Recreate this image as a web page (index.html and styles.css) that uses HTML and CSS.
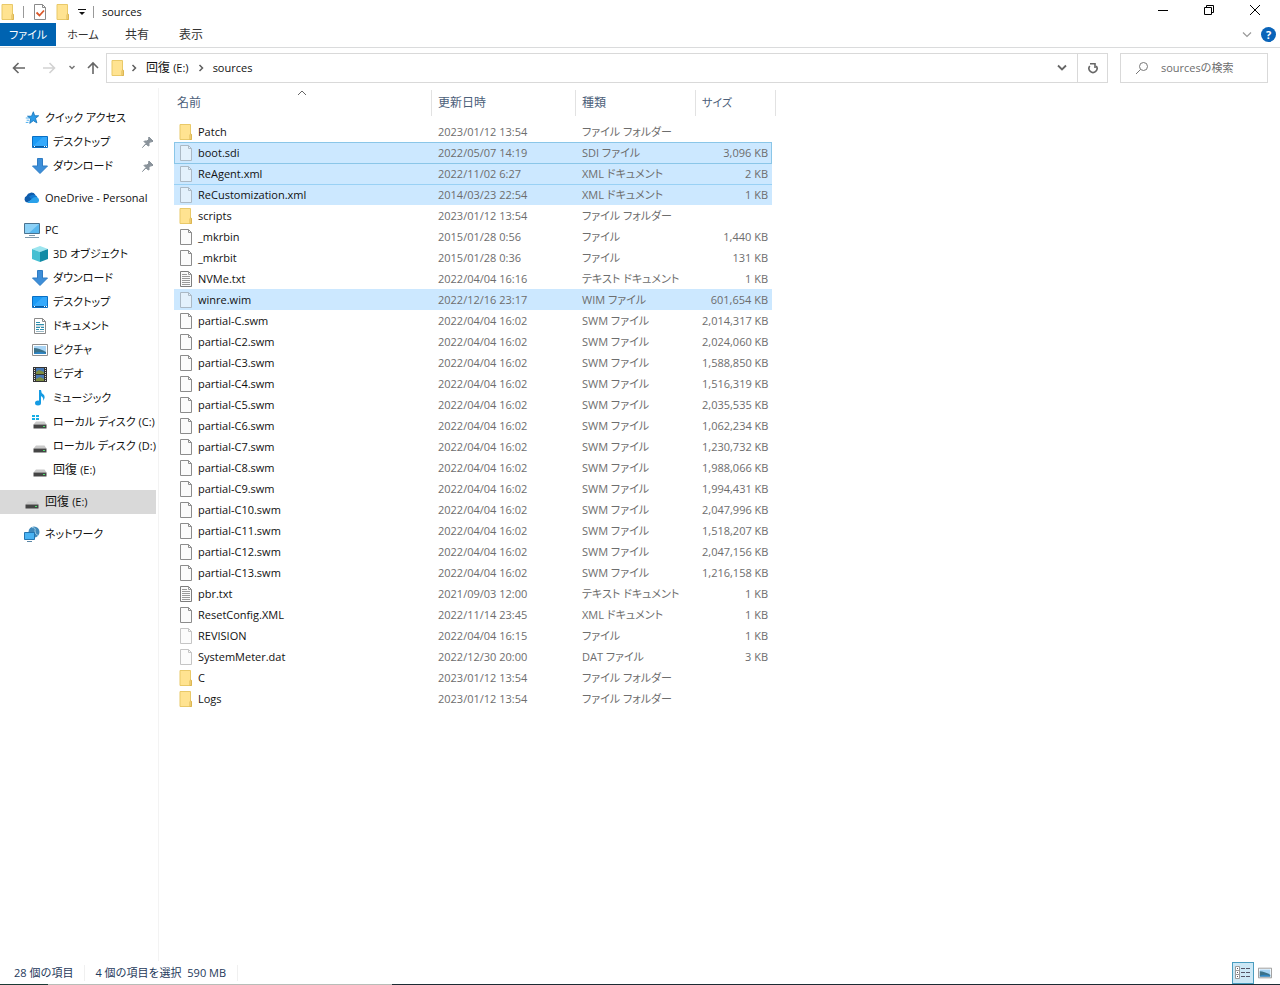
FILE: index.html
```html
<!DOCTYPE html>
<html lang="ja">
<head>
  <meta charset="UTF-8">
  <meta name="viewport" content="width=device-width, initial-scale=1.0">
  <title>sources</title>

  <link rel="stylesheet" href="styles.css">
</head>
<body>

  <!-- Shared icons -->
  <svg class="sprite" aria-hidden="true">
    <symbol id="folder" viewBox="0 0 16 16">
      <path d="M2 .5h10.500v10h1v5H2z" fill="#ffe391" stroke="#e9c969"/>
      <path d="M12 15.500v-5q1-1.500 1.500 0v5z" fill="#ffe391" stroke="#dcb653"/>
    </symbol>
    <symbol id="file" viewBox="0 0 16 16">
      <path d="M2.500.5h8l3 3v12h-11z" fill="#fbfbfb" stroke="#8c8c8c"/>
      <path d="M10.500.5v3h3" fill="none" stroke="#8c8c8c"/>
    </symbol>
    <symbol id="text" viewBox="0 0 16 16">
      <path d="M2.500.5h8l3 3v12h-11z" fill="#fbfbfb" stroke="#7d7d7d"/>
      <path d="M10.500.5v3h3M4 3.500h5M4 5.500h8M4 7.500h8M4 9.500h8M4 11.500h8M4 13.500h8" fill="none" stroke="#9a9a9a"/>
    </symbol>
    <symbol id="desktop" viewBox="0 0 16 16">
      <path d="M.5 2.500h15v11H.5z" fill="#1c9bf5" stroke="#0a6fc4"/>
      <path d="M1 12L11 3h4v9z" fill="#35a9fb"/>
      <path d="M1 12.500h14" stroke="#0d5a9e"/>
      <path d="M2 12.500h1M12 12.500h1M14 12.500h1" stroke="#fff"/>
    </symbol>
    <symbol id="download" viewBox="0 0 16 16">
      <path d="M5.500.5h5v7.500h5L8 15.500.5 8h5z" fill="#3d8ed8" stroke="#2f7cc4"/>
    </symbol>
    <symbol id="drive" viewBox="0 0 16 16">
      <path d="M4 7.500h8.500l2 3h-13z" fill="#c9c9c9"/>
      <path d="M1.500 10.500h13v4h-13z" fill="#454545"/>
      <path d="M11 12.500h2" stroke="#4ce06a"/>
    </symbol>
    <symbol id="pin" viewBox="0 0 12 12">
      <path d="M7 1l4 4-1 1-1-.5L7 7.500v2.500L5.500 9.500 4 8 .5 11.500l3.500-4L2 5.500 2.500 5H5l2-2-.5-1z" fill="#8a939b" stroke="#8a939b"/>
    </symbol>
    <symbol id="picture" viewBox="0 0 16 16">
      <path d="M.5 2.500h15v11H.5z" fill="#fff" stroke="#8f8f8f"/>
      <path d="M2 4h12v8H2z" fill="#a9d5f5"/>
      <path d="M2 6q5 0 12 4v2H2z" fill="#3b7189"/>
      <path d="M2 11q5-2 12 0v1H2z" fill="#2f86c5"/>
    </symbol>
    <symbol id="crumb" viewBox="0 0 8 8">
      <path d="M2.500 1l3 3-3 3" fill="none" stroke="#5f5f5f" stroke-width="1.500"/>
    </symbol>
  </svg>

  <!-- Title bar -->
  <header class="titlebar">
    <div class="quick-access">
      <svg class="icon"><use href="#folder"/></svg>
      <span class="bar"></span>
      <button aria-label="プロパティ">
        <svg class="icon" viewBox="0 0 16 16"><path d="M2.500.5h8l3 3v12h-11z" fill="#fff" stroke="#8a8a8a"/><path d="M10.500.5v3h3" fill="none" stroke="#8a8a8a"/><path d="M4.500 8.500l3 3 4.500-5" fill="none" stroke="#d9582b" stroke-width="1.800"/></svg>
      </button>
      <button aria-label="新しいフォルダー"><svg class="icon"><use href="#folder"/></svg></button>
      <button class="customize" aria-label="カスタマイズ">
        <svg width="8" height="8" viewBox="0 0 8 8"><path d="M0 1.500h8" stroke="#111"/><path d="M1 4h6L4 7z" fill="#111"/></svg>
      </button>
      <span class="bar"></span>
    </div>
    <h1>sources</h1>
    <div class="window-buttons">
      <button aria-label="最小化"><svg width="10" height="10"><path d="M0 5.500h10" stroke="#000"/></svg></button>
      <button aria-label="元に戻す"><svg width="10" height="10"><path d="M.5 2.500h7v7h-7zM2.500 2.500v-2h7v7h-2" fill="none" stroke="#000"/></svg></button>
      <button aria-label="閉じる"><svg width="10" height="10"><path d="M0 0l10 10M10 0L0 10" stroke="#000"/></svg></button>
    </div>
  </header>

  <!-- Ribbon tabs -->
  <nav class="ribbon">
    <button class="file-tab">ファイル</button>
    <button>ホーム</button>
    <button class="kanji">共有</button>
    <button class="kanji">表示</button>
    <div class="ribbon-end">
      <button aria-label="リボンの展開"><svg width="10" height="6"><path d="M1 .5l4 4 4-4" fill="none" stroke="#999" stroke-width="1.200"/></svg></button>
      <button class="help" aria-label="ヘルプ">?</button>
    </div>
  </nav>

  <!-- Address bar -->
  <div class="toolbar">
    <div class="history">
      <button aria-label="戻る"><svg width="14" height="12"><path d="M13 6H2M6.500 1L1.500 6l5 5" fill="none" stroke="#666" stroke-width="1.600"/></svg></button>
      <button aria-label="進む"><svg width="14" height="12"><path d="M1 6h11M7.500 1l5 5-5 5" fill="none" stroke="#d2d2d2" stroke-width="1.600"/></svg></button>
      <button class="narrow" aria-label="最近の場所"><svg width="8" height="6"><path d="M1.500 1L4 3.500 6.500 1" fill="none" stroke="#777" stroke-width="1.500"/></svg></button>
      <button class="up" aria-label="上へ"><svg width="12" height="14"><path d="M6 13V2M1 7l5-5 5 5" fill="none" stroke="#666" stroke-width="1.600"/></svg></button>
    </div>
    <div class="address">
      <svg class="icon"><use href="#folder"/></svg>
      <svg class="crumb"><use href="#crumb"/></svg>
      <button class="kanji">回復 <span class="latin">(E:)</span></button>
      <svg class="crumb"><use href="#crumb"/></svg>
      <button>sources</button>
      <button class="drop" aria-label="以前の場所"><svg width="10" height="8"><path d="M1 1.500l4 4 4-4" fill="none" stroke="#666" stroke-width="1.800"/></svg></button>
      <button class="refresh" aria-label="更新"><svg width="12" height="12"><path d="M2.800 4a4 4 0 1 0 6.400 0" fill="none" stroke="#666" stroke-width="1.600"/><path d="M3 1.800h5v4.200" fill="none" stroke="#666" stroke-width="1.600"/></svg></button>
    </div>
    <label class="search">
      <svg width="14" height="14"><circle cx="8.500" cy="5.500" r="4" fill="none" stroke="#777"/><path d="M5.500 8.500l-4.500 4.500" stroke="#777"/></svg>
      <input type="text" placeholder="sourcesの検索" aria-label="sourcesの検索">
    </label>
  </div>

  <main>
    <!-- Navigation pane -->
    <nav class="sidebar">
      <ul>
        <li><a href="#"><svg class="icon" viewBox="-1 -1 18 18"><path d="M9.500 1l1.500 4.500h4.500L12 8.500l1.500 5L9.500 11l-4 3 1-5L3 6h4.500z" fill="#2c9be8" stroke="#1878bd"/><path d="M1 8h4M2 10.500h3M1 13h3" stroke="#3da8ee"/></svg>クイック アクセス</a></li>
        <li class="child"><a href="#"><svg class="icon"><use href="#desktop"/></svg>デスクトップ<svg class="pin"><use href="#pin"/></svg></a></li>
        <li class="child"><a href="#"><svg class="icon"><use href="#download"/></svg>ダウンロード<svg class="pin"><use href="#pin"/></svg></a></li>
      </ul>
      <ul>
        <li><a href="#"><svg class="icon" viewBox="0 0 16 16"><path d="M3 12.500A3.500 3.500 0 0 1 2.500 6a5 5 0 0 1 9-1L8 10z" fill="#0f5cab"/><path d="M11 5a4 4 0 0 1 2.500 2.500L8 10 5 6.500Q8 4 11 5z" fill="#1178d0"/><path d="M3 13L9.500 7.500q2-1 4 0A3 3 0 0 1 13 13z" fill="#2aa1ea"/></svg>OneDrive - Personal</a></li>
      </ul>
      <ul>
        <li><a href="#"><svg class="icon" viewBox="0 0 16 16"><path d="M.5 1.500h15v10H.5z" fill="#59b8ef" stroke="#4a7390"/><path d="M1 2h14L5 11H1z" fill="#8cd1f7"/><path d="M5 13.500h6M1 15.500h14" stroke="#7e98aa"/></svg>PC</a></li>
        <li class="child"><a href="#"><svg class="icon" viewBox="0 0 16 16"><path d="M0 3l8-3 8 3-8 3z" fill="#9ce5ef"/><path d="M0 3l8 3v10l-8-3z" fill="#45bfd2"/><path d="M16 3L8 6v10l8-3z" fill="#118ba5"/></svg>3D オブジェクト</a></li>
        <li class="child"><a href="#"><svg class="icon"><use href="#download"/></svg>ダウンロード</a></li>
        <li class="child"><a href="#"><svg class="icon"><use href="#desktop"/></svg>デスクトップ</a></li>
        <li class="child"><a href="#"><svg class="icon" viewBox="0 0 16 16"><path d="M2.500.5h8l3 3v12h-11z" fill="#fff" stroke="#8a8a8a"/><path d="M10.500.5v3h3" fill="none" stroke="#8a8a8a"/><path d="M4 4.500h4M4 6.500h8M4 9.500h4M9 9.500h3M4 11.500h3M8 11.500h4" stroke="#2d8fae"/><path d="M4 8h8M4 13.500h8" stroke="#9ab8c5"/></svg>ドキュメント</a></li>
        <li class="child"><a href="#"><svg class="icon"><use href="#picture"/></svg>ピクチャ</a></li>
        <li class="child"><a href="#"><svg class="icon" viewBox="0 0 16 16"><path d="M1 1h14v15H1z" fill="#333"/><path d="M4 2h8v6H4zM4 9h8v6H4z" fill="#4778b5"/><path d="M4 6l3-2 5 2v2H4zM4 13l4-2 4 2v2H4z" fill="#7d8d42"/><path d="M2.500 2v14M13.500 2v14" stroke="#ddd" stroke-dasharray="1 1"/></svg>ビデオ</a></li>
        <li class="child"><a href="#"><svg class="icon" viewBox="0 0 16 16"><path d="M7 0h2q0 3 2.500 4.500Q14 7 11 11q1-3.500-2-5v7H7z" fill="#159be3"/><ellipse cx="6" cy="13" rx="3" ry="2.500" fill="#159be3"/></svg>ミュージック</a></li>
        <li class="child"><a href="#"><svg class="icon" viewBox="0 0 16 16"><use href="#drive"/><path d="M0 1h3v2H0zM4 1h3v2H4zM0 4h3v2H0zM4 4h3v2H4z" fill="#17aee5"/></svg>ローカル ディスク (C:)</a></li>
        <li class="child"><a href="#"><svg class="icon"><use href="#drive"/></svg>ローカル ディスク (D:)</a></li>
        <li class="child"><a href="#" class="kanji"><svg class="icon"><use href="#drive"/></svg>回復 <span class="latin">(E:)</span></a></li>
      </ul>
      <ul>
        <li class="current"><a href="#" class="kanji"><svg class="icon"><use href="#drive"/></svg>回復 <span class="latin">(E:)</span></a></li>
      </ul>
      <ul>
        <li><a href="#"><svg class="icon" viewBox="0 0 16 16"><circle cx="10" cy="6" r="5.500" fill="#3f88ba"/><path d="M8 1.500q4 0 3 3t3 5" fill="none" stroke="#9fd0e8"/><path d="M.5 6.500h10v7H.5z" fill="#49b3f3" stroke="#2475b0"/><path d="M3 15.500h5" stroke="#5c87a5"/></svg>ネットワーク</a></li>
      </ul>
    </nav>

    <!-- File list -->
    <section class="files">
      <table>
        <colgroup>
          <col class="col-name"><col class="col-date"><col class="col-type"><col class="col-size"><col class="col-edge">
        </colgroup>
        <thead>
          <tr>
            <th class="sorted"><button class="kanji">名前</button><svg width="10" height="6"><path d="M1 5l4-4 4 4" fill="none" stroke="#666"/></svg></th>
            <th><button class="kanji">更新日時</button></th>
            <th><button class="kanji">種類</button></th>
            <th colspan="2"><button>サイズ</button></th>
          </tr>
        </thead>
        <tbody>
          <tr><td><svg class="icon"><use href="#folder"/></svg>Patch</td><td>2023/01/12 13:54</td><td>ファイル フォルダー</td><td></td></tr>
          <tr class="selected focused"><td><svg class="icon faded"><use href="#file"/></svg>boot.sdi</td><td>2022/05/07 14:19</td><td>SDI ファイル</td><td>3,096 KB</td></tr>
          <tr class="selected"><td><svg class="icon faded"><use href="#file"/></svg>ReAgent.xml</td><td>2022/11/02 6:27</td><td>XML ドキュメント</td><td>2 KB</td></tr>
          <tr class="selected"><td><svg class="icon faded"><use href="#file"/></svg>ReCustomization.xml</td><td>2014/03/23 22:54</td><td>XML ドキュメント</td><td>1 KB</td></tr>
          <tr><td><svg class="icon"><use href="#folder"/></svg>scripts</td><td>2023/01/12 13:54</td><td>ファイル フォルダー</td><td></td></tr>
          <tr><td><svg class="icon"><use href="#file"/></svg>_mkrbin</td><td>2015/01/28 0:56</td><td>ファイル</td><td>1,440 KB</td></tr>
          <tr><td><svg class="icon"><use href="#file"/></svg>_mkrbit</td><td>2015/01/28 0:36</td><td>ファイル</td><td>131 KB</td></tr>
          <tr><td><svg class="icon"><use href="#text"/></svg>NVMe.txt</td><td>2022/04/04 16:16</td><td>テキスト ドキュメント</td><td>1 KB</td></tr>
          <tr class="selected"><td><svg class="icon faded"><use href="#file"/></svg>winre.wim</td><td>2022/12/16 23:17</td><td>WIM ファイル</td><td>601,654 KB</td></tr>
          <tr><td><svg class="icon"><use href="#file"/></svg>partial-C.swm</td><td>2022/04/04 16:02</td><td>SWM ファイル</td><td>2,014,317 KB</td></tr>
          <tr><td><svg class="icon"><use href="#file"/></svg>partial-C2.swm</td><td>2022/04/04 16:02</td><td>SWM ファイル</td><td>2,024,060 KB</td></tr>
          <tr><td><svg class="icon"><use href="#file"/></svg>partial-C3.swm</td><td>2022/04/04 16:02</td><td>SWM ファイル</td><td>1,588,850 KB</td></tr>
          <tr><td><svg class="icon"><use href="#file"/></svg>partial-C4.swm</td><td>2022/04/04 16:02</td><td>SWM ファイル</td><td>1,516,319 KB</td></tr>
          <tr><td><svg class="icon"><use href="#file"/></svg>partial-C5.swm</td><td>2022/04/04 16:02</td><td>SWM ファイル</td><td>2,035,535 KB</td></tr>
          <tr><td><svg class="icon"><use href="#file"/></svg>partial-C6.swm</td><td>2022/04/04 16:02</td><td>SWM ファイル</td><td>1,062,234 KB</td></tr>
          <tr><td><svg class="icon"><use href="#file"/></svg>partial-C7.swm</td><td>2022/04/04 16:02</td><td>SWM ファイル</td><td>1,230,732 KB</td></tr>
          <tr><td><svg class="icon"><use href="#file"/></svg>partial-C8.swm</td><td>2022/04/04 16:02</td><td>SWM ファイル</td><td>1,988,066 KB</td></tr>
          <tr><td><svg class="icon"><use href="#file"/></svg>partial-C9.swm</td><td>2022/04/04 16:02</td><td>SWM ファイル</td><td>1,994,431 KB</td></tr>
          <tr><td><svg class="icon"><use href="#file"/></svg>partial-C10.swm</td><td>2022/04/04 16:02</td><td>SWM ファイル</td><td>2,047,996 KB</td></tr>
          <tr><td><svg class="icon"><use href="#file"/></svg>partial-C11.swm</td><td>2022/04/04 16:02</td><td>SWM ファイル</td><td>1,518,207 KB</td></tr>
          <tr><td><svg class="icon"><use href="#file"/></svg>partial-C12.swm</td><td>2022/04/04 16:02</td><td>SWM ファイル</td><td>2,047,156 KB</td></tr>
          <tr><td><svg class="icon"><use href="#file"/></svg>partial-C13.swm</td><td>2022/04/04 16:02</td><td>SWM ファイル</td><td>1,216,158 KB</td></tr>
          <tr><td><svg class="icon"><use href="#text"/></svg>pbr.txt</td><td>2021/09/03 12:00</td><td>テキスト ドキュメント</td><td>1 KB</td></tr>
          <tr><td><svg class="icon"><use href="#file"/></svg>ResetConfig.XML</td><td>2022/11/14 23:45</td><td>XML ドキュメント</td><td>1 KB</td></tr>
          <tr><td><svg class="icon faded"><use href="#file"/></svg>REVISION</td><td>2022/04/04 16:15</td><td>ファイル</td><td>1 KB</td></tr>
          <tr><td><svg class="icon faded"><use href="#file"/></svg>SystemMeter.dat</td><td>2022/12/30 20:00</td><td>DAT ファイル</td><td>3 KB</td></tr>
          <tr><td><svg class="icon"><use href="#folder"/></svg>C</td><td>2023/01/12 13:54</td><td>ファイル フォルダー</td><td></td></tr>
          <tr><td><svg class="icon"><use href="#folder"/></svg>Logs</td><td>2023/01/12 13:54</td><td>ファイル フォルダー</td><td></td></tr>
        </tbody>
      </table>
    </section>
  </main>

  <!-- Status bar -->
  <footer>
    <span class="count">28 個の項目</span>
    <span class="count">4 個の項目を選択&nbsp; 590 MB</span>
    <div class="views">
      <button class="active" aria-label="詳細"><svg width="16" height="14"><path d="M.5.5h4v4h-4zM.5 4.500h4v4h-4zM.5 8.500h4v4h-4z" fill="#fff" stroke="#999"/><path d="M2 2.500h1M2 6.500h1M2 10.500h1M6 2.500h4M11 2.500h4M6 6.500h4M11 6.500h4M6 10.500h4M11 10.500h4" stroke="#556"/></svg></button>
      <button aria-label="大アイコン"><svg width="14" height="14"><use href="#picture"/></svg></button>
    </div>
  </footer>

</body>
</html>
```
FILE: styles.css
```css
/* Global Styles */
* {
  box-sizing: border-box;
}

body {
  margin: 0;
  min-height: 100vh;
  display: flex;
  flex-direction: column;
  background: #fff;
  color: #111;
  font-family: "Open Sans", "Noto Sans CJK JP", sans-serif;
  font-size: 11px;
  line-height: 16px;
  font-feature-settings: "palt";
}

button, input {
  font: inherit;
  font-feature-settings: inherit;
  color: inherit;
  background: none;
  border: none;
  padding: 0;
}

button {
  display: flex;
  align-items: center;
  justify-content: center;
  white-space: pre;
}

svg {
  flex: none;
}

.sprite {
  position: absolute;
  width: 0;
  height: 0;
}

.icon {
  width: 16px;
  height: 16px;
}

.faded {
  opacity: 0.5;
}

.kanji {
  font-size: 12px;
  font-feature-settings: normal;
}

.latin {
  font-size: 11px;
}

/* Title bar */
.titlebar {
  display: flex;
  height: 23px;
}

.quick-access {
  display: flex;
  align-items: center;
}

.quick-access .bar {
  width: 1px;
  height: 12px;
  margin: 0 8px 0 7px;
  background: #999;
}

.quick-access button + button {
  margin-left: 7px;
}

.quick-access .customize {
  width: 8px;
}

.titlebar h1 {
  margin: 0;
  font-size: 11px;
  font-weight: normal;
  line-height: 23px;
}

.window-buttons {
  display: flex;
  margin-left: auto;
  margin-right: 2px;
}

.window-buttons button {
  width: 46px;
  height: 20px;
}

/* Ribbon */
.ribbon {
  display: flex;
  height: 25px;
  padding-bottom: 1px;
  border-bottom: 1px solid #dadbdc;
  color: #333;
}

.ribbon > button {
  width: 54px;
}

.ribbon .file-tab {
  width: 56px;
  background: #0063b1;
  color: #fff;
}

.ribbon-end {
  display: flex;
  align-items: center;
  gap: 9px;
  margin-left: auto;
  margin-right: 4px;
}

.ribbon .help {
  width: 15px;
  height: 15px;
  border-radius: 50%;
  background: #0a64b9;
  color: #fff;
  font-weight: bold;
}

/* Address bar */
.toolbar {
  display: flex;
  padding: 5px 12px 5px 4px;
}

.history {
  display: flex;
  width: 102px;
}

.history button {
  width: 30px;
}

.history .narrow {
  width: 16px;
}

.history .up {
  width: 26px;
}

.address {
  flex: 1;
  display: flex;
  align-items: center;
  height: 30px;
  padding-left: 3px;
  border: 1px solid #d9d9d9;
}

.crumb {
  width: 8px;
  height: 8px;
  margin: 0 8px;
}

.icon + .crumb {
  margin-left: 4px;
}

.address .drop {
  width: 30px;
  margin-left: auto;
}

.address .refresh {
  width: 30px;
  align-self: stretch;
  border-left: 1px solid #d9d9d9;
}

.search {
  display: flex;
  align-items: center;
  gap: 12px;
  width: 148px;
  margin-left: 12px;
  padding-left: 14px;
  border: 1px solid #d9d9d9;
}

.search input {
  flex: 1;
  min-width: 0;
  outline: none;
}

.search input::placeholder {
  color: #6d6d6d;
}

/* Main */
main {
  flex: 1;
  display: flex;
}

/* Navigation pane */
.sidebar {
  width: 159px;
  padding: 18px 2px 0 0;
  border-right: 1px solid #f3f3f3;
}

.sidebar ul {
  list-style: none;
  margin: 0 0 8px;
  padding: 0;
}

.sidebar a {
  display: flex;
  align-items: center;
  height: 24px;
  padding-left: 24px;
  color: #111;
  text-decoration: none;
  white-space: pre;
}

.sidebar .child a {
  padding-left: 32px;
}

.sidebar .icon {
  margin-right: 5px;
}

.sidebar .pin {
  width: 12px;
  height: 12px;
  margin-left: auto;
  margin-right: 2px;
}

.sidebar .current {
  background: #d9d9d9;
}

/* File list */
.files {
  flex: 1;
  padding-left: 15px;
}

table {
  width: 602px;
  table-layout: fixed;
  border-collapse: collapse;
}

.col-name {
  width: 258px;
}

.col-date {
  width: 144px;
}

.col-type {
  width: 120px;
}

.col-size {
  width: 76px;
}

.col-edge {
  width: 4px;
}

th {
  position: relative;
  height: 33px;
  padding: 2px 0 0;
  vertical-align: top;
  font-weight: normal;
}

th button {
  width: 100%;
  height: 26px;
  justify-content: flex-start;
  padding-left: 6px;
  border-right: 1px solid #e2e2e2;
  color: #4c607a;
}

/* Sort arrow sits over the column title */
.sorted svg {
  position: absolute;
  top: 2px;
  left: 50%;
  margin-left: -6px;
}

.sorted button {
  padding-left: 3px;
}

td {
  height: 21px;
  padding: 0 4px 0 6px;
  color: #6d6d6d;
  white-space: nowrap;
}

td:first-child {
  display: flex;
  align-items: center;
  gap: 4px;
  padding-left: 4px;
  color: #111;
}

td:nth-child(4) {
  text-align: right;
}

.selected td {
  background: #cce8ff;
}

.selected + .selected td {
  box-shadow: inset 0 1px #99d1f5;
}

.focused td {
  box-shadow: inset 0 1px #8ac6e8;
}

.focused td:first-child {
  box-shadow: inset 1px 1px #8ac6e8;
}

.focused td:last-child {
  box-shadow: inset -1px 1px #8ac6e8;
}

.focused + .selected td {
  box-shadow: inset 0 1px #8ac6e8;
}

/* Status bar */
footer {
  display: flex;
  align-items: center;
  height: 24px;
  padding-left: 14px;
  padding-bottom: 1px;
  color: #1e395b;
  font-feature-settings: normal;
  background: linear-gradient(to right, #1b3a35 48px, #b8bdb8 48px 392px, #1d2b33 392px) bottom / 100% 1px no-repeat;
}

.count {
  padding-right: 11px;
  margin-right: 10px;
  border-right: 1px solid #f0f0f0;
}

.views {
  display: flex;
  margin-left: auto;
  margin-right: 4px;
}

.views button {
  width: 22px;
  height: 22px;
}

.views .active {
  background: #cce8f6;
  border: 1px solid #4a9dbf;
}
```
